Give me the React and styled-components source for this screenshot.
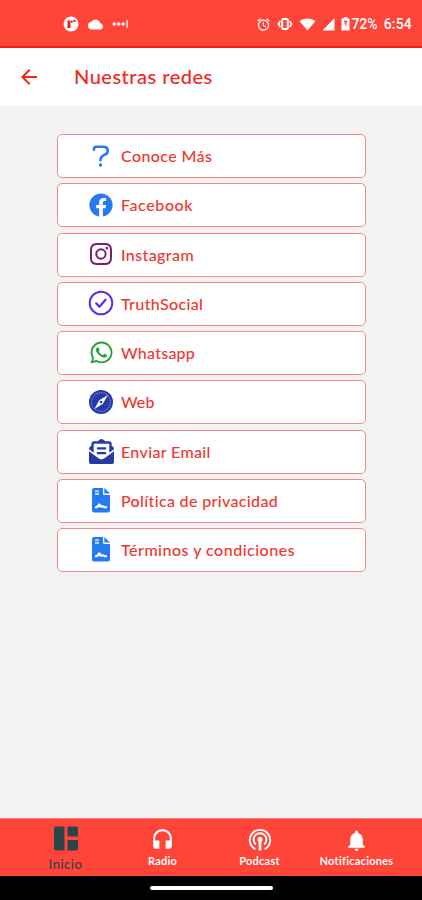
import React from "react";
import styled, { createGlobalStyle } from "styled-components";
import {
  FaFacebook,
  FaEnvelopeOpenText,
  FaWhatsapp,
} from "react-icons/fa";
import {
  MdArrowBack,
  MdAlarm,
  MdCloud,
  MdHeadset,
  MdNotifications,
} from "react-icons/md";
import { BsInstagram } from "react-icons/bs";

const App = () => {
  return (
    <Screen>
      <GlobalStyle />
      <StatusBar>
        <StatusGroup>
          <RadioBadge />
          <MdCloud size={15} />
          <Dots />
        </StatusGroup>
        <StatusIcons>
          <MdAlarm size={15} />
          <VibrateIcon />
          <WifiIcon />
          <SignalIcon />
          <BatteryIcon />
          <Percent>72%</Percent>
          <Clock>6:54</Clock>
        </StatusIcons>
      </StatusBar>
      <Header>
        <MdArrowBack size={24} />
        <Title>Nuestras redes</Title>
      </Header>
      <Content>
        {links.map((link) => (
          <LinkButton key={link.label}>
            <IconSlot $color={link.color}>{link.icon}</IconSlot>
            <LinkLabel $spacing={link.spacing}>{link.label}</LinkLabel>
          </LinkButton>
        ))}
      </Content>
      <TabBar>
        <Tab $active>
          <BoardIcon />
          <TabLabel $active>Inicio</TabLabel>
        </Tab>
        <Tab>
          <MdHeadset size={25} />
          <TabLabel>Radio</TabLabel>
        </Tab>
        <Tab>
          <PodcastIcon />
          <TabLabel>Podcast</TabLabel>
        </Tab>
        <Tab>
          <MdNotifications size={25} />
          <TabLabel>Notificaciones</TabLabel>
        </Tab>
      </TabBar>
      <SystemBar>
        <HomeHandle />
      </SystemBar>
    </Screen>
  );
};

//Status icons
const RadioBadge = () => (
  <svg width="16" height="16" viewBox="0 0 16 16">
    <circle cx="8" cy="8" r="7.5" fill="#fff" />
    <path d="M4.5 4.500h3v7.500h-3z" fill="#e5241b" />
    <path d="M8 4.500h1.700v2.300H8zM10.500 3.800h2v2.200h-2z" fill="#e5241b" />
  </svg>
);

const Dots = () => (
  <svg width="17" height="10" viewBox="0 0 17 10" fill="#fff" opacity="0.9">
    <circle cx="2.300" cy="5" r="1.800" />
    <circle cx="6.700" cy="5" r="1.800" />
    <circle cx="11.100" cy="5" r="1.800" />
    <rect x="14.300" y="1" width="1.500" height="8" />
  </svg>
);

const VibrateIcon = () => (
  <svg width="16" height="14" viewBox="0 0 16 14" fill="none" stroke="#fff">
    <rect x="5.200" y="2" width="5.600" height="10" rx="1" strokeWidth="2" />
    <path d="M3.400 4 1.400 7l2 3M12.600 4l2 3-2 3" strokeWidth="1.700" />
  </svg>
);

const WifiIcon = () => (
  <svg width="17" height="13" viewBox="0 0 17 13">
    <path d="M.6 3.200C5-.4 12-.4 16.400 3.200L8.500 12.600z" fill="#fff" />
  </svg>
);

const SignalIcon = () => (
  <svg width="13" height="13" viewBox="0 0 13 13">
    <path d="M12.500 .3v12.200H.3z" fill="#fff" />
  </svg>
);

const BatteryIcon = () => (
  <svg width="9" height="14" viewBox="0 0 9 14">
    <path d="M2.700 0h3.600v1.500H8.500v12H.5v-12h2.200z" fill="#fff" />
    <path d="M2.500 3.500h4L4.800 9.500z" fill="#f9655c" />
  </svg>
);

//Link icons
const QuestionIcon = () => (
  <svg width="24" height="24" viewBox="0 0 24 24" fill="none">
    <path
      d="M5 5.800V5Q5 2.700 7.300 2.700H14Q18.800 2.700 18.800 6.700Q18.800 9.800 15 11.100Q11.500 12.400 11.500 16.300"
      stroke="currentColor"
      strokeWidth="2.600"
      strokeLinecap="round"
    />
    <circle cx="11.500" cy="21" r="1.700" fill="currentColor" />
  </svg>
);

const CheckIcon = () => (
  <svg width="26" height="26" viewBox="0 0 26 26" fill="none" stroke="currentColor">
    <circle cx="13" cy="13" r="11.300" strokeWidth="2" />
    <path
      d="M8.200 13.400l3.300 3.300 6-7"
      strokeWidth="2.200"
      strokeLinecap="round"
      strokeLinejoin="round"
    />
  </svg>
);

const CompassIcon = () => (
  <svg width="24" height="24" viewBox="0 0 24 24">
    <circle cx="12" cy="12" r="12" fill="currentColor" />
    <circle
      cx="12"
      cy="12"
      r="9.400"
      fill="none"
      stroke="#8f9bdc"
      strokeWidth="1.300"
      strokeDasharray="1 1.460"
    />
    <path d="M19 5 13.800 13.800 5.500 19 10.200 10.200z" fill="#fff" />
    <path d="M10.200 10.200 13.800 13.800 12 12z" fill="currentColor" />
    <circle cx="12" cy="12" r="1.300" fill="currentColor" />
  </svg>
);

const FileIcon = () => (
  <svg width="18" height="25" viewBox="0 0 18 25">
    <path
      d="M2 0h9v5.500q0 1.500 1.500 1.500H18v15.500q0 2-2 2H2q-2 0-2-2V2Q0 0 2 0z"
      fill="currentColor"
    />
    <path d="M12.300 0 18 5.600h-5.700z" fill="currentColor" />
    <path d="M3 3.200h4M3 6h4" stroke="#b5d2fd" strokeWidth="2" />
    <path
      d="M3 19.300h1.500l2.700-3 2.500 2.500 1.600-.6 1.200 1.100h2.500"
      stroke="#fff"
      strokeWidth="2"
      fill="#fff"
      strokeLinejoin="round"
    />
  </svg>
);

//Tab icons
const BoardIcon = () => (
  <svg width="24" height="25" viewBox="0 0 24 25" fill="currentColor">
    <path d="M2 .5h8.500v24H2q-2 0-2-2v-20q0-2 2-2z" />
    <path d="M13.500.5H22q2 0 2 2v8H13.500z" />
    <path d="M13.500 14H24v8.500q0 2-2 2h-8.500z" />
  </svg>
);

const PodcastIcon = () => (
  <svg width="24" height="25" viewBox="0 0 24 25" fill="none" stroke="currentColor">
    <path d="M7.300 21.100a10.200 10.200 0 1 1 9.400 0" strokeWidth="1.900" />
    <path d="M7.900 16.500a6.400 6.400 0 1 1 8.200 0" strokeWidth="1.900" />
    <circle cx="12" cy="11.500" r="2.500" fill="currentColor" stroke="none" />
    <path d="M12 13v9.500" strokeWidth="2.800" />
  </svg>
);

const links = [
  { label: "Conoce Más", color: "#267bf1", spacing: "0.4px", icon: <QuestionIcon /> },
  { label: "Facebook", color: "#267bf1", spacing: "0.6px", icon: <FaFacebook size={24} /> },
  { label: "Instagram", color: "#7b1c70", spacing: "0.4px", icon: <BsInstagram size={22} /> },
  { label: "TruthSocial", color: "#5a30e6", spacing: "0.35px", icon: <CheckIcon /> },
  { label: "Whatsapp", color: "#22a233", spacing: "0.25px", icon: <FaWhatsapp size={25} /> },
  { label: "Web", color: "#263ba8", spacing: "0.1px", icon: <CompassIcon /> },
  { label: "Enviar Email", color: "#263ba8", spacing: "0.35px", icon: <FaEnvelopeOpenText size={25} /> },
  { label: "Política de privacidad", color: "#267bf1", spacing: "0.350px", icon: <FileIcon /> },
  { label: "Términos y condiciones", color: "#267bf1", spacing: "0.5px", icon: <FileIcon /> },
];

//Styling
const GlobalStyle = createGlobalStyle`
  * {
    box-sizing: border-box;
  }

  body {
    margin: 0;
    font-family: Lato, sans-serif;
  }

  svg {
    display: block;
    flex-shrink: 0;
  }
`;

const Screen = styled.div`
  display: flex;
  flex-direction: column;
  width: 422px;
  height: 900px;
  background: #f2f2f2;
  overflow: hidden;
`;

const StatusBar = styled.div`
  display: flex;
  align-items: center;
  justify-content: space-between;
  height: 48px;
  padding: 2px 10px 0 63px;
  color: #fff;
  background: #ff4438;
  border-bottom: 2px solid #f31d12;
`;

const StatusGroup = styled.div`
  display: flex;
  align-items: center;
  gap: 9px;
`;

const StatusIcons = styled.div`
  display: flex;
  align-items: center;
  gap: 6px;
  font-family: Roboto, sans-serif;
  font-size: 14px;
  font-weight: 500;
`;

const Percent = styled.span`
  margin-left: -5px;
`;

const Clock = styled.span`
  letter-spacing: 0.2px;
`;

const Header = styled.header`
  display: flex;
  align-items: center;
  gap: 33px;
  height: 58px;
  padding-left: 17px;
  color: #f0281e;
  background: #fff;
`;

const Title = styled.h1`
  margin: 0;
  padding-bottom: 2px;
  font-size: 20px;
  font-weight: 500;
  letter-spacing: 0.5px;
  white-space: nowrap;
`;

const Content = styled.main`
  flex: 1;
  display: flex;
  flex-direction: column;
  gap: 5.3px;
  padding: 28px 56px 0 57px;
`;

const LinkButton = styled.button`
  display: flex;
  align-items: center;
  height: 44px;
  padding: 0 0 1px 29px;
  font-family: inherit;
  background: #fff;
  border: 1px solid #f48a85;
  border-radius: 5px;
`;

const IconSlot = styled.span`
  display: flex;
  align-items: center;
  justify-content: center;
  width: 28px;
  color: ${(props) => props.$color};
`;

const LinkLabel = styled.span`
  margin-left: 6px;
  color: #f0352d;
  font-size: 16px;
  font-weight: 500;
  letter-spacing: ${(props) => props.$spacing};
  white-space: nowrap;
`;

const TabBar = styled.nav`
  display: grid;
  grid-template-columns: repeat(4, 97px);
  height: 58px;
  padding-left: 17px;
  background: #ff4438;
  border-top: 1px solid #f77b73;
`;

const Tab = styled.div`
  display: flex;
  flex-direction: column;
  align-items: center;
  padding-top: ${(props) => (props.$active ? "7px" : "9px")};
  color: ${(props) => (props.$active ? "#2b444c" : "#fff")};
`;

const TabLabel = styled.span`
  margin-top: ${(props) => (props.$active ? "6px" : "0")};
  font-size: ${(props) => (props.$active ? "13px" : "11px")};
  font-weight: ${(props) => (props.$active ? 500 : 700)};
  letter-spacing: ${(props) => (props.$active ? "0.5px" : "0.25px")};
  line-height: 15px;
`;

const SystemBar = styled.div`
  display: flex;
  justify-content: center;
  height: 24px;
  padding-top: 10px;
  background: #000;
`;

const HomeHandle = styled.div`
  width: 123px;
  height: 4px;
  background: #fff;
  border-radius: 2px;
`;

export default App;
